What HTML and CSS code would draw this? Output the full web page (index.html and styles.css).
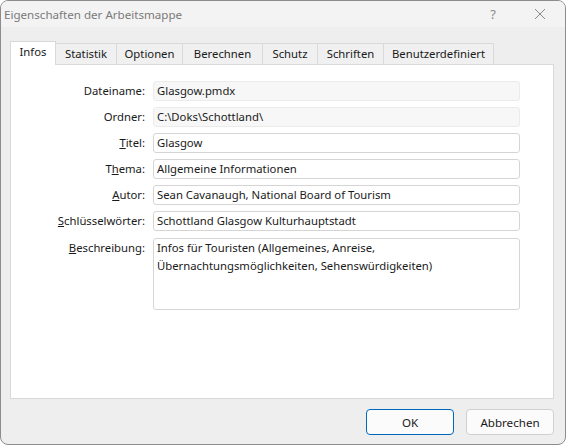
FILE: index.html
```html
<!DOCTYPE html>
<html lang="de">
<head>
    <meta charset="UTF-8">
    <title>Eigenschaften der Arbeitsmappe</title>
    <link rel="stylesheet" href="styles.css">
</head>
<body>
    <div class="window">
        <div class="titlebar">
            <span class="title">Eigenschaften der Arbeitsmappe</span>
            <span class="help">?</span>
            <span class="close">
                <svg width="12" height="12" viewBox="0 0 12 12"><path d="M1 1 L11 11 M11 1 L1 11" stroke="#8a8a8a" stroke-width="1" fill="none"/></svg>
            </span>
        </div>

        <div class="content">
            <ul class="tabs">
                <li class="tab active t-infos">Infos</li>
                <li class="tab t-statistik">Statistik</li>
                <li class="tab t-optionen">Optionen</li>
                <li class="tab t-berechnen">Berechnen</li>
                <li class="tab t-schutz">Schutz</li>
                <li class="tab t-schriften">Schriften</li>
                <li class="tab t-benutzer">Benutzerdefiniert</li>
            </ul>

            <div class="panel">
                <div class="form">
                    <label class="lbl">Dateiname:</label>
                    <div class="field readonly">Glasgow.pmdx</div>

                    <label class="lbl">Ordner:</label>
                    <div class="field readonly">C:\Doks\Schottland\</div>

                    <label class="lbl"><u>T</u>itel:</label>
                    <div class="field">Glasgow</div>

                    <label class="lbl">T<u>h</u>ema:</label>
                    <div class="field">Allgemeine Informationen</div>

                    <label class="lbl"><u>A</u>utor:</label>
                    <div class="field">Sean Cavanaugh, National Board of Tourism</div>

                    <label class="lbl"><u>S</u>chlüsselwörter:</label>
                    <div class="field">Schottland Glasgow Kulturhauptstadt</div>

                    <label class="lbl top"><u>B</u>eschreibung:</label>
                    <div class="field area">Infos für Touristen (Allgemeines, Anreise,<br>Übernachtungsmöglichkeiten, Sehenswürdigkeiten)</div>
                </div>
            </div>

            <div class="buttons">
                <button class="btn default">OK</button>
                <button class="btn">Abbrechen</button>
            </div>
        </div>
    </div>
</body>
</html>
```

FILE: styles.css
```css
* {
    margin: 0;
    padding: 0;
    box-sizing: border-box;
}

body {
    width: 566px;
    height: 445px;
    font-family: "Noto Sans", "Open Sans", sans-serif;
    font-size: 11.3px;
    color: #1a1a1a;
    background: #ffffff;
}

.window {
    width: 566px;
    height: 445px;
    border: 1px solid #8c8c8c;
    border-radius: 8px;
    background-color: #eeeeee;
    overflow: hidden;
}

.titlebar {
    height: 26px;
    display: flex;
    align-items: center;
    background-color: #f3f3f3;
    color: #7a7a7a;
}

.title {
    flex: 1;
    padding-left: 3px;
    font-size: 11.6px;
}

.help {
    width: 40px;
    font-size: 13px;
    color: #8a8a8a;
    margin-right: 6px;
    text-align: center;
}

.close {
    width: 46px;
    display: flex;
    justify-content: center;
    padding-right: 4px;
}

.content {
    padding: 13px 11px 0 9px;
}

/* tab strip */
.tabs {
    list-style: none;
    display: flex;
    align-items: flex-end;
    height: 24px;
}

.tab {
    height: 21px;
    line-height: 19px;
    text-align: center;
    white-space: nowrap;
    background-color: #f0f0f0;
    border: 1px solid #d9d9d9;
    border-left: none;
    border-bottom: none;
}

.tab.active {
    height: 24px;
    background-color: #ffffff;
    border-left: 1px solid #d9d9d9;
    line-height: 20px;
    margin-bottom: -1px;
}

.t-infos { width: 46px; }
.t-statistik { width: 61px; }
.t-optionen { width: 66px; }
.t-berechnen { width: 80px; }
.t-schutz { width: 55px; }
.t-schriften { width: 66px; }
.t-benutzer { width: 110px; }

.panel {
    height: 335px;
    background-color: #ffffff;
    border: 1px solid #d9d9d9;
    padding-top: 16px;
}

.form {
    display: grid;
    grid-template-columns: 134px 367px;
    column-gap: 8px;
    row-gap: 6px;
}

.lbl {
    text-align: right;
    line-height: 20px;
}

.lbl.top {
    padding-top: 1px;
}

.field {
    height: 20px;
    border: 1px solid #d5d5d5;
    border-radius: 3px;
    padding-left: 3px;
    line-height: 18px;
    background-color: #ffffff;
    white-space: nowrap;
}

.field.readonly {
    background-color: #f7f7f7;
    border-color: #ebebeb;
}

.field.area {
    height: 72px;
    margin-top: 1px;
    line-height: 18px;
}

.buttons {
    display: flex;
    justify-content: flex-end;
    gap: 12px;
    padding-top: 10px;
}

.btn {
    width: 88px;
    height: 26px;
    border: 1px solid #d0d0d0;
    border-radius: 4px;
    background-color: #fbfbfb;
    font-family: inherit;
    font-size: 11.6px;
    color: #1a1a1a;
}

.btn.default {
    border-color: #0067c0;
}
```
